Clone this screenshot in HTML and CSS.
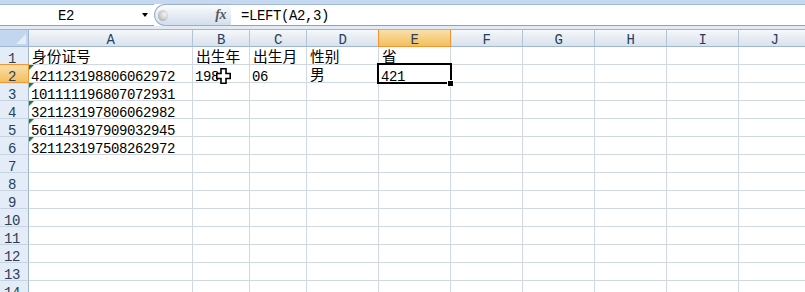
FILE: index.html
```html
<!DOCTYPE html>
<html>
<head>
<meta charset="utf-8">
<link rel="stylesheet" href="styles.css">
</head>
<body>
<div class="topband"></div>
<div class="fbar">
  <div class="namebox"><span class="ref">E2</span><span class="arrow"></span></div>
  <div class="pill"><span class="sphere"></span><span class="fx">fx</span></div>
  <div class="formula">=LEFT(A2,3)</div>
</div>
<div class="gap"></div>
<div class="sheet">
  <div class="row">
    <div class="corner"><span class="tri"></span></div>
    <div class="h">A</div><div class="h">B</div><div class="h">C</div><div class="h">D</div>
    <div class="h sel">E</div><div class="h">F</div><div class="h">G</div><div class="h">H</div><div class="h">I</div><div class="h">J</div>
  </div>
  <div class="row">
    <div class="rh">1</div>
    <div class="c zh">身份证号</div><div class="c zh">出生年</div><div class="c zh">出生月</div><div class="c zh">性别</div><div class="c zh">省</div>
    <div class="c"></div><div class="c"></div><div class="c"></div><div class="c"></div><div class="c"></div>
  </div>
  <div class="row">
    <div class="rh sel">2</div>
    <div class="c err">421123198806062972</div><div class="c">1988</div><div class="c">06</div><div class="c zh">男</div>
    <div class="c active">421<span class="selbox"><span class="handle"></span></span></div>
    <div class="c"></div><div class="c"></div><div class="c"></div><div class="c"></div><div class="c"></div>
  </div>
  <div class="row">
    <div class="rh">3</div>
    <div class="c err">101111196807072931</div><div class="c"></div><div class="c"></div><div class="c"></div><div class="c"></div>
    <div class="c"></div><div class="c"></div><div class="c"></div><div class="c"></div><div class="c"></div>
  </div>
  <div class="row">
    <div class="rh">4</div>
    <div class="c err">321123197806062982</div><div class="c"></div><div class="c"></div><div class="c"></div><div class="c"></div>
    <div class="c"></div><div class="c"></div><div class="c"></div><div class="c"></div><div class="c"></div>
  </div>
  <div class="row">
    <div class="rh">5</div>
    <div class="c err">561143197909032945</div><div class="c"></div><div class="c"></div><div class="c"></div><div class="c"></div>
    <div class="c"></div><div class="c"></div><div class="c"></div><div class="c"></div><div class="c"></div>
  </div>
  <div class="row">
    <div class="rh">6</div>
    <div class="c err">321123197508262972</div><div class="c"></div><div class="c"></div><div class="c"></div><div class="c"></div>
    <div class="c"></div><div class="c"></div><div class="c"></div><div class="c"></div><div class="c"></div>
  </div>
  <div class="row">
    <div class="rh">7</div>
    <div class="c"></div><div class="c"></div><div class="c"></div><div class="c"></div><div class="c"></div>
    <div class="c"></div><div class="c"></div><div class="c"></div><div class="c"></div><div class="c"></div>
  </div>
  <div class="row">
    <div class="rh">8</div>
    <div class="c"></div><div class="c"></div><div class="c"></div><div class="c"></div><div class="c"></div>
    <div class="c"></div><div class="c"></div><div class="c"></div><div class="c"></div><div class="c"></div>
  </div>
  <div class="row">
    <div class="rh">9</div>
    <div class="c"></div><div class="c"></div><div class="c"></div><div class="c"></div><div class="c"></div>
    <div class="c"></div><div class="c"></div><div class="c"></div><div class="c"></div><div class="c"></div>
  </div>
  <div class="row">
    <div class="rh">10</div>
    <div class="c"></div><div class="c"></div><div class="c"></div><div class="c"></div><div class="c"></div>
    <div class="c"></div><div class="c"></div><div class="c"></div><div class="c"></div><div class="c"></div>
  </div>
  <div class="row">
    <div class="rh">11</div>
    <div class="c"></div><div class="c"></div><div class="c"></div><div class="c"></div><div class="c"></div>
    <div class="c"></div><div class="c"></div><div class="c"></div><div class="c"></div><div class="c"></div>
  </div>
  <div class="row">
    <div class="rh">12</div>
    <div class="c"></div><div class="c"></div><div class="c"></div><div class="c"></div><div class="c"></div>
    <div class="c"></div><div class="c"></div><div class="c"></div><div class="c"></div><div class="c"></div>
  </div>
  <div class="row">
    <div class="rh">13</div>
    <div class="c"></div><div class="c"></div><div class="c"></div><div class="c"></div><div class="c"></div>
    <div class="c"></div><div class="c"></div><div class="c"></div><div class="c"></div><div class="c"></div>
  </div>
  <div class="row">
    <div class="rh">14</div>
    <div class="c"></div><div class="c"></div><div class="c"></div><div class="c"></div><div class="c"></div>
    <div class="c"></div><div class="c"></div><div class="c"></div><div class="c"></div><div class="c"></div>
  </div>
  <svg class="cursor" width="15" height="16" viewBox="0 0 15 16"><path d="M5 0.8H10V5.5H14.2V10.5H10V15.2H5V10.5H0.8V5.5H5Z" fill="#fff" stroke="#000" stroke-width="1.6"/></svg>
</div>
</body>
</html>
```

FILE: styles.css
```css
html, body {
  margin: 0;
  padding: 0;
}
body {
  width: 805px;
  height: 292px;
  overflow: hidden;
  background: #fff;
  font-family: "Liberation Mono", monospace;
  font-size: 14px;
  color: #000;
}
.topband {
  height: 4px;
  background: #c5d8f0;
}
.fbar {
  display: flex;
  height: 22px;
}
.namebox,
.formula {
  box-sizing: border-box;
  height: 22px;
  border-top: 1px solid #9fb9dd;
  border-bottom: 1px solid #8fa3bd;
  background: #fff;
}
.namebox {
  width: 154px;
  display: flex;
  align-items: center;
}
.ref {
  width: 132px;
  text-align: center;
  letter-spacing: -0.4px;
  line-height: 20px;
  padding-top: 2px;
}
.arrow {
  margin-left: 10px;
  width: 0;
  height: 0;
  border-left: 3.5px solid transparent;
  border-right: 3.5px solid transparent;
  border-top: 4px solid #000;
}
.pill {
  box-sizing: border-box;
  width: 77px;
  height: 22px;
  border: 1px solid #9aafca;
  border-right: none;
  border-radius: 11px 0 0 11px;
  background: linear-gradient(#fbfcfe, #e6ecf4 50%, #d3deec);
  display: flex;
  align-items: center;
  justify-content: space-between;
  padding: 0 5px 0 3px;
}
.sphere {
  width: 10px;
  height: 11px;
  border-radius: 50%;
  background: radial-gradient(circle at 65% 40%, #f4f4f4, #c9c9c9 55%, #8e8e8e);
}
.fx {
  font-family: "Liberation Serif", serif;
  font-style: italic;
  font-weight: bold;
  font-size: 14px;
  color: #5a5a5a;
  letter-spacing: -0.5px;
}
.formula {
  flex: 1;
  padding-left: 10px;
  line-height: 20px;
  padding-top: 1px;
  letter-spacing: -0.4px;
}
.gap {
  height: 3px;
  background: #e3eaf4;
}
.sheet {
  position: relative;
}
.row {
  display: grid;
  grid-template-columns: 29px 164px 57px 57px repeat(7, 72px);
  height: 18px;
}
.row > div {
  box-sizing: border-box;
  height: 18px;
  white-space: nowrap;
}
.corner {
  background: #c3d6ef;
  border-top: 1px solid #9eb6ce;
  border-right: 1px solid #9eb6ce;
  border-bottom: 1px solid #9eb6ce;
  position: relative;
}
.tri {
  position: absolute;
  right: 2px;
  bottom: 2px;
  width: 0;
  height: 0;
  border-left: 10px solid transparent;
  border-bottom: 10px solid #e6edf6;
}
.h {
  background: linear-gradient(#f5f8fb, #e4eaf2 60%, #d9e2ed);
  border-top: 1px solid #9eb6ce;
  border-right: 1px solid #b1c4da;
  border-bottom: 1px solid #9eb6ce;
  text-align: center;
  color: #28405a;
  line-height: 16px;
  padding-top: 2px;
  letter-spacing: -0.4px;
}
.h.sel {
  background: linear-gradient(#fae0ad, #f6cf83 50%, #f1c15f);
  border-right-color: #f29436;
  border-bottom-color: #f29436;
  box-shadow: -1px 0 0 #f29436;
}
.rh {
  background: #e4ecf7;
  border-right: 1px solid #9eb6ce;
  border-bottom: 1px solid #c5d3e4;
  text-align: center;
  padding-right: 4px;
  color: #28405a;
  line-height: 17px;
  padding-top: 4px;
  letter-spacing: -0.4px;
}
.rh.sel {
  background: linear-gradient(#fae0ad, #f6cf83 50%, #f1c15f);
  border-bottom-color: #f29436;
  border-right-color: #f29436;
  box-shadow: 0 -1px 0 #f29436;
}
.c {
  position: relative;
  border-right: 1px solid #d0d7e5;
  border-bottom: 1px solid #d0d7e5;
  padding: 4px 0 0 2px;
  line-height: 17px;
  letter-spacing: -0.4px;
}
.c.zh {
  font-family: "Noto Sans CJK SC", sans-serif;
  font-size: 14.7px;
  letter-spacing: 0;
  line-height: 16px;
  padding-top: 1px;
  padding-left: 3px;
}
.c.active {
  z-index: 1;
}
.c.err::before {
  content: "";
  position: absolute;
  top: 0;
  left: 0;
  width: 0;
  height: 0;
  border-top: 5px solid #10891a;
  border-right: 5px solid transparent;
}
.selbox {
  position: absolute;
  left: -2px;
  top: -2px;
  width: 75px;
  height: 21px;
  box-sizing: border-box;
  border: 2px solid #000;
}
.handle {
  position: absolute;
  right: -4px;
  bottom: -5px;
  width: 5px;
  height: 5px;
  background: #000;
  border: 1px solid #fff;
}
.cursor {
  position: absolute;
  left: 216px;
  top: 39px;
  z-index: 2;
}
```
